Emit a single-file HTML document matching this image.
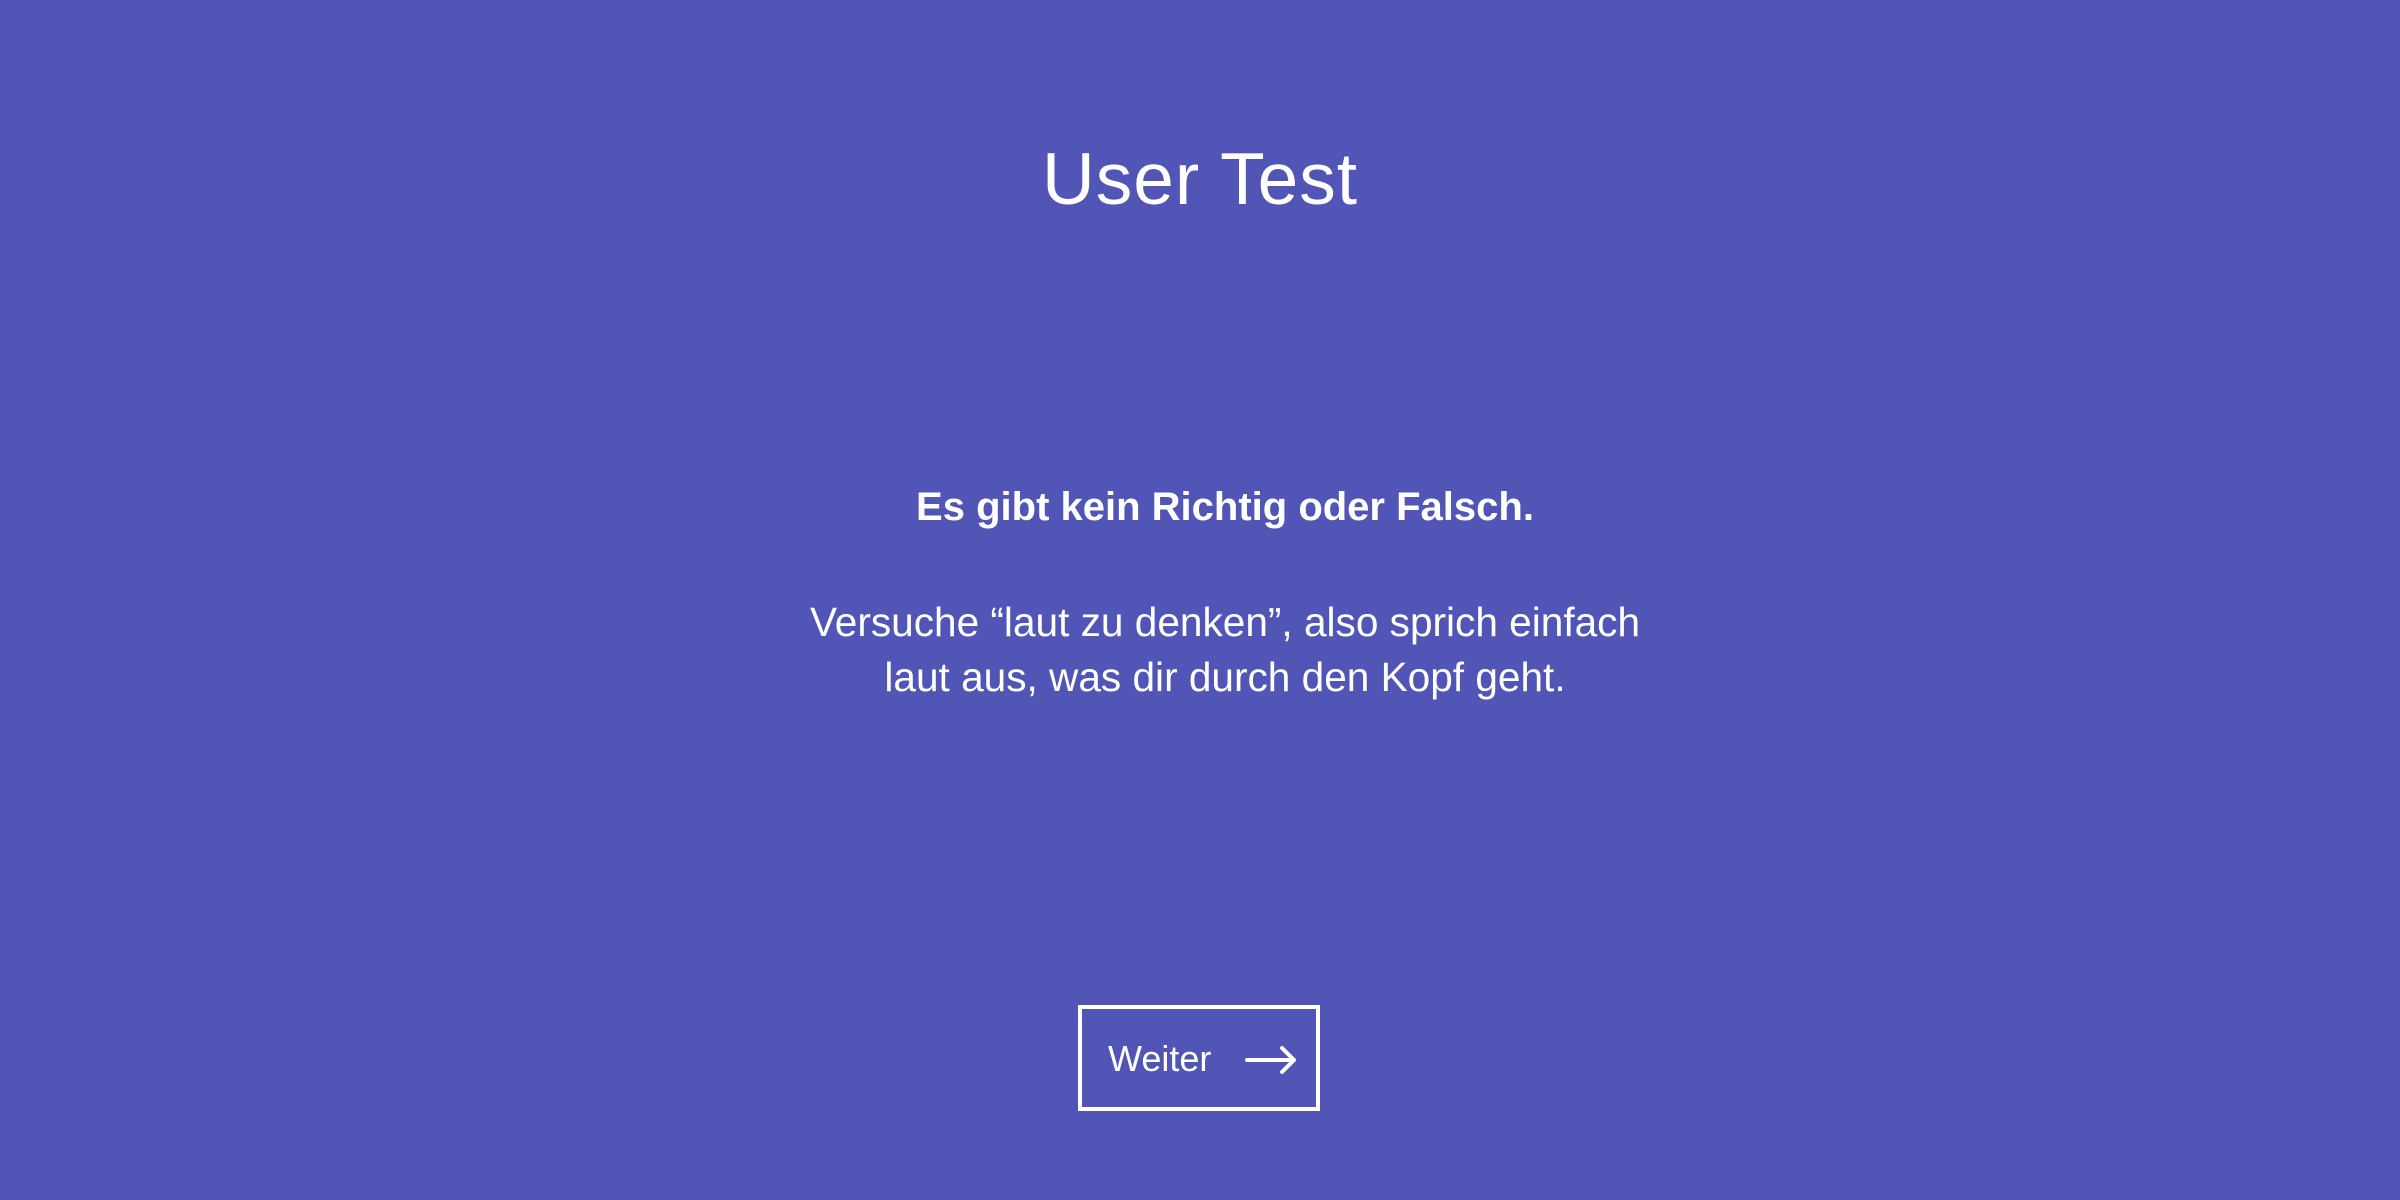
<!DOCTYPE html>
<html><head><meta charset="utf-8"><style>
html,body{margin:0;padding:0;}
body{width:2400px;height:1200px;background:#5055b6;color:#fff;font-family:"Liberation Sans",sans-serif;position:relative;overflow:hidden;}
.t{position:absolute;left:0;width:2400px;text-align:center;white-space:nowrap;}
#title{top:135px;font-size:73px;line-height:90px;letter-spacing:1px;}
#bold{left:25px;top:482px;font-size:40px;line-height:50px;font-weight:bold;}
#p{left:25px;top:595px;font-size:40.6px;line-height:55px;}
#btn{position:absolute;left:1078px;top:1005px;width:234px;height:98px;border:4px solid #fff;}
#btn span{position:absolute;left:26px;top:30px;font-size:36px;line-height:40px;}
#btn svg{position:absolute;left:162px;top:36px;}
</style></head><body>
<div class="t" id="title">User Test</div>
<div class="t" id="bold">Es gibt kein Richtig oder Falsch.</div>
<div class="t" id="p">Versuche “laut zu denken”, also sprich einfach<br>laut aus, was dir durch den Kopf geht.</div>
<div id="btn"><span>Weiter</span><svg width="56" height="30" viewBox="0 0 56 30"><path d="M3 15 H50 M38 3 L50 15 L38 27" fill="none" stroke="#fff" stroke-width="4" stroke-linecap="round" stroke-linejoin="round"/></svg></div>
</body></html>
